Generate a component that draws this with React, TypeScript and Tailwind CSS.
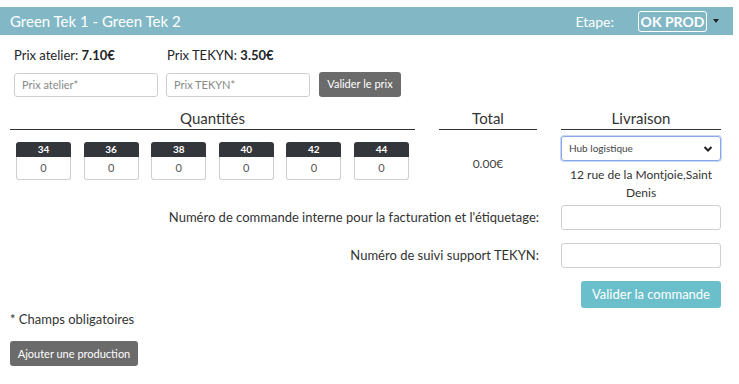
const sizes = ["34", "36", "38", "40", "42", "44"];

function SectionHead({ label }: { label: string }) {
  return (
    <div className="border-b border-[#333] pb-[1px] text-center text-[15px] leading-[20px] text-[#333]">
      {label}
    </div>
  );
}

export default function App() {
  return (
    <div
      className="w-[733px] pt-[7px] text-[#212529]"
      style={{ fontFamily: "Lato, 'Noto Sans', sans-serif" }}
    >
      <div className="flex h-[28px] items-center bg-[#82b8c6] pl-[10px] pr-[14px] text-white">
        <span className="text-[15px]">Green Tek 1 - Green Tek 2</span>
        <span className="ml-auto mr-[24px] text-[14px]">Etape:</span>
        <span className="flex h-[21px] w-[69px] items-center justify-center rounded-[3px] border border-white text-[14px] font-bold">
          OK PROD
        </span>
        <span className="ml-[6px] h-0 w-0 border-x-[3.5px] border-t-[4px] border-x-transparent border-t-[#222]" />
      </div>

      <div className="pl-[14px]">
        <div className="mt-[11px] flex text-[13px] leading-[18px]">
          <div className="w-[153px]">
            Prix atelier: <b>7.10€</b>
          </div>
          <div>
            Prix TEKYN: <b>3.50€</b>
          </div>
        </div>
        <div className="mt-[8px] flex items-center">
          <input
            placeholder="Prix atelier*"
            className="h-[24px] w-[144px] rounded-[3px] border border-[#ccd0d4] px-[7px] text-[11px] placeholder:text-[#888]"
          />
          <input
            placeholder="Prix TEKYN*"
            className="ml-[8px] h-[24px] w-[144px] rounded-[3px] border border-[#ccd0d4] px-[7px] text-[11px] placeholder:text-[#888]"
          />
          <button className="ml-[9px] h-[25px] w-[82px] rounded-[3px] bg-[#6b6b6b] text-[11px] text-white">
            Valider le prix
          </button>
        </div>
      </div>

      <div className="mt-[11px] flex pl-[10px]">
        <div className="w-[405px]">
          <SectionHead label="Quantités" />
          <div className="mt-[12px] flex gap-[12.6px] pl-[6px]">
            {sizes.map((s) => (
              <div key={s} className="w-[55px]">
                <div className="flex h-[15px] items-center justify-center rounded-t-[3px] bg-[#33363b] text-[10px] font-bold text-white">
                  {s}
                </div>
                <div className="flex h-[23px] items-center justify-center rounded-b-[3px] border border-t-0 border-[#ccd0d4] text-[11px] text-[#555]">
                  0
                </div>
              </div>
            ))}
          </div>
        </div>
        <div className="ml-[24px] w-[98px]">
          <SectionHead label="Total" />
          <div className="mt-[25px] text-center text-[12px] text-[#444]">0.00€</div>
        </div>
        <div className="ml-[24px] w-[160px]">
          <SectionHead label="Livraison" />
          <div className="mt-[6px] flex h-[25px] items-center justify-between rounded-[3px] border border-[#86a8e6] px-[7px] text-[10px] text-[#444] shadow-[0_0_0_1px_#c9d8f5]">
            <span>Hub logistique</span>
            <svg width="10" height="8" viewBox="0 0 10 8">
              <path d="M1.5 2 L5 5.5 L8.5 2" fill="none" stroke="#222" strokeWidth="2" />
            </svg>
          </div>
          <div className="mt-[5px] text-center text-[12px] leading-[18px] text-[#333]">
            12 rue de la Montjoie,Saint Denis
          </div>
        </div>
      </div>

      <div className="mt-[3px] flex items-center justify-end pr-[12px]">
        <span className="mr-[22px] text-[13px] text-[#333]">
          Numéro de commande interne pour la facturation et l'étiquetage:
        </span>
        <input className="h-[25px] w-[160px] rounded-[3px] border border-[#ccd0d4]" />
      </div>
      <div className="mt-[13px] flex items-center justify-end pr-[12px]">
        <span className="mr-[22px] text-[13px] text-[#333]">Numéro de suivi support TEKYN:</span>
        <input className="h-[25px] w-[160px] rounded-[3px] border border-[#ccd0d4]" />
      </div>
      <div className="mt-[13px] flex justify-end pr-[12px]">
        <button className="h-[27px] w-[140px] rounded-[3px] bg-[#6bbfcb] text-[13px] text-white">
          Valider la commande
        </button>
      </div>

      <div className="mt-[2px] pl-[10px] text-[13px] text-[#333]">* Champs obligatoires</div>
      <div className="mt-[10px] pl-[10px]">
        <button className="h-[25px] w-[128px] rounded-[3px] bg-[#6b6b6b] text-[11px] text-white">
          Ajouter une production
        </button>
      </div>
    </div>
  );
}
